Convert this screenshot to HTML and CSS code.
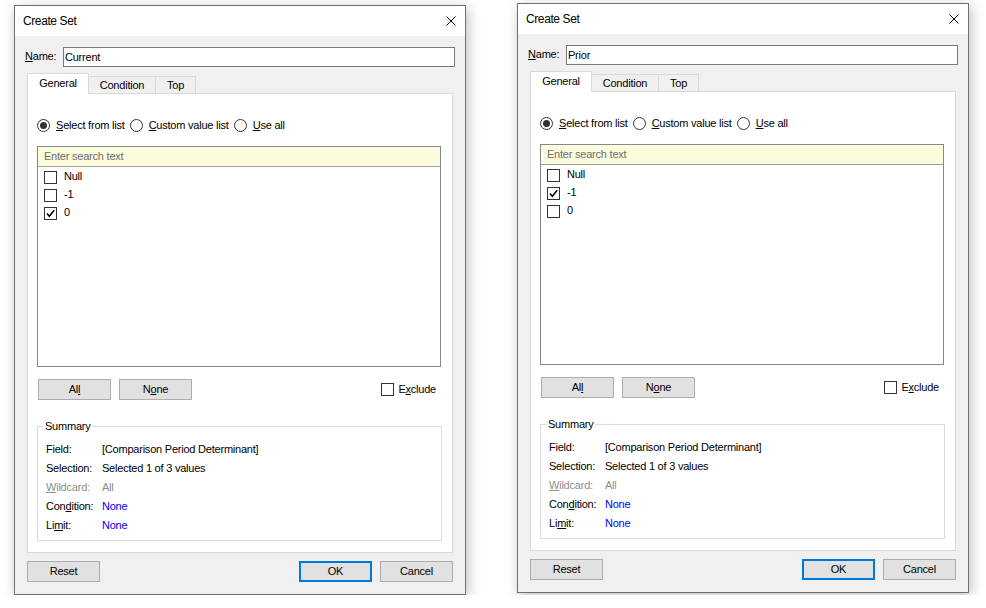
FILE: index.html
```html
<!DOCTYPE html>
<html lang="en">
<head>
<meta charset="utf-8">
<title>Create Set</title>
<link rel="stylesheet" href="styles.css">
</head>
<body>
<div class="desk">

  <section class="dlg dlg-current">
    <header class="titlebar">
      <span class="title">Create Set</span>
      <svg class="close" viewBox="0 0 10 10"><path d="M0.5 0.5 9.5 9.5 M9.5 0.5 0.5 9.5" stroke="#000" stroke-width="1" fill="none"/></svg>
    </header>
    <div class="dlg-body">
      <div class="name-row">
        <span class="name-label"><u>N</u>ame:</span>
        <div class="name-field">Current</div>
      </div>
      <div class="tabs">
        <div class="tab tab-general active">General</div>
        <div class="tab tab-condition">Condition</div>
        <div class="tab tab-top">Top</div>
      </div>
      <div class="panel">
        <div class="mode-row">
          <span class="radio on"></span><span class="opt"><u>S</u>elect from list</span>
          <span class="radio"></span><span class="opt"><u>C</u>ustom value list</span>
          <span class="radio"></span><span class="opt"><u>U</u>se all</span>
        </div>
        <div class="listbox">
          <div class="search">Enter search text</div>
          <ul class="items">
            <li><span class="check"></span><span>Null</span></li>
            <li><span class="check"></span><span>-1</span></li>
            <li><span class="check"><svg viewBox="0 0 11 11"><polyline points="2,5.5 4.3,8.3 9.2,2.2" fill="none" stroke="#000" stroke-width="1.5"/></svg></span><span>0</span></li>
          </ul>
        </div>
        <div class="list-actions">
          <button class="btn">Al<u>l</u></button>
          <button class="btn">N<u>o</u>ne</button>
          <span class="exclude"><span class="check"></span><span>E<u>x</u>clude</span></span>
        </div>
        <fieldset class="summary">
          <legend>Summary</legend>
          <dl class="facts">
            <dt>Field:</dt><dd>[Comparison Period Determinant]</dd>
            <dt>Selection:</dt><dd>Selected 1 of 3 values</dd>
            <dt class="muted"><u>W</u>ildcard:</dt><dd class="muted">All</dd>
            <dt>Con<u>d</u>ition:</dt><dd class="link">None</dd>
            <dt>Li<u>m</u>it:</dt><dd class="link">None</dd>
          </dl>
        </fieldset>
      </div>
      <div class="footer">
        <button class="btn">Reset</button>
        <button class="btn ok">OK</button>
        <button class="btn">Cancel</button>
      </div>
    </div>
  </section>

  <section class="dlg dlg-prior">
    <header class="titlebar">
      <span class="title">Create Set</span>
      <svg class="close" viewBox="0 0 10 10"><path d="M0.5 0.5 9.5 9.5 M9.5 0.5 0.5 9.5" stroke="#000" stroke-width="1" fill="none"/></svg>
    </header>
    <div class="dlg-body">
      <div class="name-row">
        <span class="name-label"><u>N</u>ame:</span>
        <div class="name-field">Prior</div>
      </div>
      <div class="tabs">
        <div class="tab tab-general active">General</div>
        <div class="tab tab-condition">Condition</div>
        <div class="tab tab-top">Top</div>
      </div>
      <div class="panel">
        <div class="mode-row">
          <span class="radio on"></span><span class="opt"><u>S</u>elect from list</span>
          <span class="radio"></span><span class="opt"><u>C</u>ustom value list</span>
          <span class="radio"></span><span class="opt"><u>U</u>se all</span>
        </div>
        <div class="listbox">
          <div class="search">Enter search text</div>
          <ul class="items">
            <li><span class="check"></span><span>Null</span></li>
            <li><span class="check"><svg viewBox="0 0 11 11"><polyline points="2,5.5 4.3,8.3 9.2,2.2" fill="none" stroke="#000" stroke-width="1.5"/></svg></span><span>-1</span></li>
            <li><span class="check"></span><span>0</span></li>
          </ul>
        </div>
        <div class="list-actions">
          <button class="btn">Al<u>l</u></button>
          <button class="btn">N<u>o</u>ne</button>
          <span class="exclude"><span class="check"></span><span>E<u>x</u>clude</span></span>
        </div>
        <fieldset class="summary">
          <legend>Summary</legend>
          <dl class="facts">
            <dt>Field:</dt><dd>[Comparison Period Determinant]</dd>
            <dt>Selection:</dt><dd>Selected 1 of 3 values</dd>
            <dt class="muted"><u>W</u>ildcard:</dt><dd class="muted">All</dd>
            <dt>Con<u>d</u>ition:</dt><dd class="link">None</dd>
            <dt>Li<u>m</u>it:</dt><dd class="link">None</dd>
          </dl>
        </fieldset>
      </div>
      <div class="footer">
        <button class="btn">Reset</button>
        <button class="btn ok">OK</button>
        <button class="btn">Cancel</button>
      </div>
    </div>
  </section>

</div>
</body>
</html>
```
FILE: styles.css
```css
body {
  margin: 0;
  background: #fff;
  color: #000;
  font: 11px/1.2 "Liberation Sans", Arial, sans-serif;
  letter-spacing: -0.22px;
}

u {
  text-decoration: underline;
  text-underline-offset: 1px;
}

/* two dialogs side by side */
.desk {
  display: flex;
  align-items: flex-start;
  gap: 51px;
  padding-left: 14px;
}

.dlg {
  width: 452px;
  height: 590px;
  box-sizing: border-box;
  border: 1px solid #707070;
  background: #f0f0f0;
  box-shadow: 2px 3px 12px rgba(0, 0, 0, 0.26);
  display: flex;
  flex-direction: column;
}

.dlg-current { margin-top: 5px; }
.dlg-prior { margin-top: 3px; }

.titlebar {
  flex: none;
  height: 30px;
  background: #fff;
  display: flex;
  align-items: center;
  justify-content: space-between;
  padding: 0 9px 0 8px;
}

.title {
  font-size: 12px;
  letter-spacing: -0.4px;
}

.close {
  width: 10px;
  height: 10px;
  display: block;
}

.dlg-body {
  flex: 1;
  display: flex;
  flex-direction: column;
  padding: 0 12px;
}

/* name field */
.name-row {
  display: flex;
  align-items: center;
  height: 20px;
  margin: 11px -2px 0;
}

.name-label {
  flex: none;
  width: 38px;
}

.name-field {
  flex: 1;
  height: 20px;
  box-sizing: border-box;
  border: 1px solid #7a7a7a;
  background: #fff;
  padding-left: 1px;
  line-height: 18px;
}

/* tab strip */
.tabs {
  display: flex;
  align-items: flex-end;
  height: 20px;
  margin-top: 6px;
}

.tab {
  box-sizing: border-box;
  height: 17px;
  margin-left: -1px;
  padding-top: 1px;
  border: 1px solid #d9d9d9;
  border-bottom: 0;
  background: #f0f0f0;
  text-align: center;
  line-height: 14px;
}

.tab.active {
  height: 21px;
  margin-left: 0;
  margin-bottom: -1px;
  padding-top: 2px;
  background: #fff;
  position: relative;
  z-index: 1;
}

.tab-general { width: 62px; }
.tab-condition { width: 68px; }
.tab-top { width: 41px; }

.panel {
  flex: none;
  height: 460px;
  box-sizing: border-box;
  border: 1px solid #d9d9d9;
  background: #fff;
  padding: 0 11px 0 9px;
}

/* selection mode radios */
.mode-row {
  display: flex;
  align-items: center;
  height: 13px;
  margin-top: 25px;
  line-height: 13px;
}

.radio {
  flex: none;
  width: 13px;
  height: 13px;
  box-sizing: border-box;
  border: 1px solid #333;
  border-radius: 50%;
  display: flex;
  align-items: center;
  justify-content: center;
  margin-right: 6px;
}

.radio.on::after {
  content: "";
  width: 7px;
  height: 7px;
  border-radius: 50%;
  background: #333;
}

.opt { margin-right: 5px; }

/* value list */
.listbox {
  height: 221px;
  margin-top: 14px;
  box-sizing: border-box;
  border: 1px solid #828790;
  display: flex;
  flex-direction: column;
}

.search {
  flex: none;
  height: 20px;
  box-sizing: border-box;
  border-bottom: 1px solid #a0a0a0;
  background: #fcfcdc;
  color: #6d6d6d;
  padding-left: 6px;
  line-height: 19px;
}

.items {
  list-style: none;
  margin: 0;
  padding: 1px 0 0 6px;
}

.items li {
  height: 18px;
  display: flex;
  align-items: center;
  gap: 7px;
}

.check {
  flex: none;
  width: 13px;
  height: 13px;
  box-sizing: border-box;
  border: 1px solid #333;
  background: #fff;
  display: flex;
}

.check svg {
  width: 11px;
  height: 11px;
}

.list-actions {
  display: flex;
  align-items: center;
  margin-top: 12px;
  padding-left: 1px;
}

.btn {
  width: 73px;
  height: 21px;
  box-sizing: border-box;
  border: 1px solid #adadad;
  background: #e1e1e1;
  color: #000;
  font: inherit;
  letter-spacing: inherit;
  padding: 0;
}

.btn + .btn { margin-left: 8px; }

.exclude {
  margin-left: auto;
  margin-right: 5px;
  display: flex;
  align-items: center;
  gap: 4px;
}

/* summary group */
.summary {
  width: 405px;
  box-sizing: border-box;
  min-width: 0;
  margin: 19px 0 0;
  padding: 7px 8px 5px;
  border: 1px solid #dcdcdc;
}

.summary legend {
  padding: 0 1px;
  margin-left: -2px;
  line-height: 14px;
}

.facts {
  display: grid;
  grid-template-columns: 56px 1fr;
  grid-auto-rows: 19px;
  align-items: center;
  margin: 0;
}

.facts dt,
.facts dd { margin: 0; }

.muted { color: #8d8d8d; }
.link { color: #0000ff; }

.footer {
  display: flex;
  margin-top: 8px;
}

.footer .ok {
  margin-left: auto;
  border: 2px solid #0078d7;
}
```
